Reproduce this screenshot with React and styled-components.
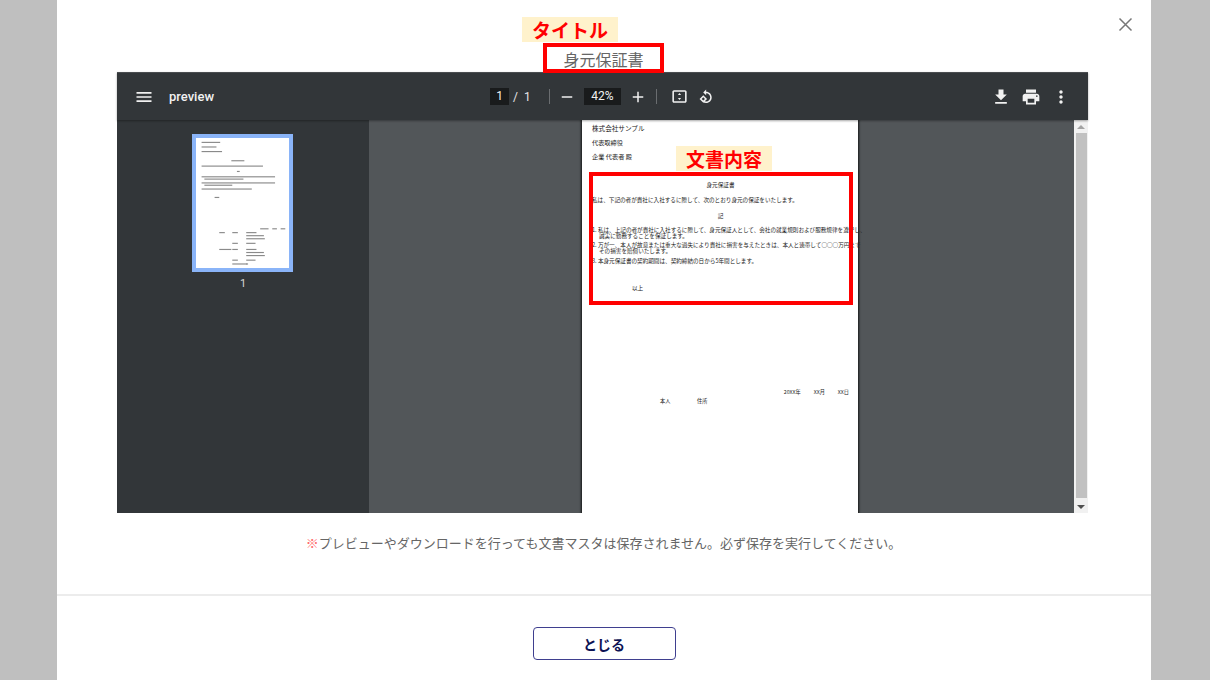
import React from "react";
import styled, { createGlobalStyle } from "styled-components";

const GlobalStyle = createGlobalStyle`
  html, body {
    margin: 0;
    padding: 0;
    background: #bfbfbf;
    font-family: "Noto Sans CJK JP", "Noto Sans", sans-serif;
  }
`;

const Backdrop = styled.div`
  width: 1210px;
  height: 680px;
  overflow: hidden;
  display: flex;
  justify-content: center;
  background: #bfbfbf;
`;

const Modal = styled.div`
  position: relative;
  width: 1094px;
  height: 680px;
  margin-left: -2px;
  background: #fff;
  display: flex;
  flex-direction: column;
`;

const CloseButton = styled.button`
  position: absolute;
  top: 16px;
  right: 17px;
  width: 17px;
  height: 17px;
  padding: 0;
  border: none;
  background: none;
  color: #777;
  display: flex;
`;

const Title = styled.h1`
  margin: 0;
  height: 72px;
  padding-top: 47px;
  box-sizing: border-box;
  text-align: center;
  font-size: 16px;
  line-height: 24px;
  font-weight: 400;
  color: #666;
  padding-right: 1px;
`;

const Viewer = styled.div`
  width: 971px;
  height: 441px;
  margin-left: 60px;
  display: flex;
  flex-direction: column;
  background: #525659;
  font-family: Roboto, "Noto Sans CJK JP", sans-serif;
`;

const Toolbar = styled.div`
  height: 48px;
  flex: none;
  display: grid;
  grid-template-columns: 1fr auto 1fr;
  align-items: center;
  background: #323639;
  border-top: 1px solid #4a4d50;
  box-sizing: border-box;
  box-shadow: 0 1px 2px rgba(0, 0, 0, 0.35);
  color: #f1f1f1;
  position: relative;
`;

const ToolGroup = styled.div`
  display: flex;
  align-items: center;
  justify-content: ${(p) => p.$justify || "flex-start"};
  padding: ${(p) => p.$padding || "0"};
`;

const DocName = styled.span`
  margin-left: 15px;
  font-size: 13px;
  font-weight: 500;
  color: #f1f1f1;
`;

const PageBox = styled.span`
  width: ${(p) => p.$width}px;
  height: 17px;
  background: #191b1c;
  color: #f1f1f1;
  font-size: 12px;
  line-height: 17px;
  text-align: center;
`;

const PageCount = styled.span`
  margin-left: 4px;
  font-size: 12px;
  width: 32px;
  word-spacing: 3px;
  color: #e6e6e6;
`;

const ToolSep = styled.span`
  width: 1px;
  height: 15px;
  background: #6a6d70;
  margin: ${(p) => p.$margin};
`;

const ToolIcon = styled.svg`
  width: ${(p) => p.$size || 20}px;
  height: ${(p) => p.$size || 20}px;
  fill: currentColor;
  flex: none;
  margin: ${(p) => p.$margin || "0"};
`;

const ViewerBody = styled.div`
  flex: 1;
  min-height: 0;
  display: flex;
`;

const Sidebar = styled.div`
  width: 252px;
  flex: none;
  background: #323639;
  display: flex;
  flex-direction: column;
  align-items: center;
  padding-top: 14px;
  box-sizing: border-box;
`;

const ThumbFrame = styled.div`
  width: 93px;
  height: 130px;
  border: 4px solid #8ab4f8;
  line-height: 0;
  margin-right: 1px;
`;

const ThumbNumber = styled.div`
  margin-top: 5px;
  font-size: 11px;
  line-height: 14px;
  color: #d8d8d8;
`;

const PageArea = styled.div`
  flex: 1;
  display: flex;
  justify-content: center;
  overflow: hidden;
  padding-right: 1px;
`;

const Sheet = styled.div`
  width: 276px;
  height: 394px;
  margin-right: 2px;
  background: #fff;
  box-shadow: 0 0 2px 1px rgba(0, 0, 0, 0.75);
  padding: 4px 9px 0 10px;
  box-sizing: border-box;
  display: flex;
  flex-direction: column;
  font-family: "Noto Sans CJK JP", sans-serif;
  color: #222;
`;

const DocLine = styled.div`
  font-size: ${(p) => p.$size || 5.6}px;
  line-height: ${(p) => p.$lh || 8}px;
  margin-top: ${(p) => p.$top || 0}px;
  text-align: ${(p) => p.$align || "left"};
  padding-left: ${(p) => p.$indent || 0}px;
  white-space: nowrap;
`;

const DateRow = styled.div`
  display: flex;
  justify-content: flex-end;
  gap: 13px;
  margin-top: 96px;
  font-size: 5.2px;
  line-height: 8px;
`;

const SignTable = styled.div`
  display: grid;
  grid-template-columns: 68px 37px 1fr;
  padding-left: 0;
  font-size: 5.2px;
  line-height: 10px;
  margin-top: 0;
  margin-left: 0;
`;

const SignCell = styled.div`
  grid-column: ${(p) => p.$col};
  margin-top: ${(p) => p.$top || 0}px;
  white-space: nowrap;
  padding-left: ${(p) => p.$pad || 0}px;
`;

const Scrollbar = styled.div`
  width: 14px;
  flex: none;
  background: #f1f1f1;
  display: flex;
  flex-direction: column;
  align-items: center;
`;

const ScrollArrow = styled.div`
  height: 13px;
  flex: none;
  display: flex;
  align-items: center;
  justify-content: center;
  &::before {
    content: "";
    border-left: 4px solid transparent;
    border-right: 4px solid transparent;
    ${(p) => (p.$down ? "border-top: 4px solid #505050;" : "border-bottom: 4px solid #a3a3a3;")}
  }
`;

const ScrollThumb = styled.div`
  width: 11px;
  flex: 1;
  background: #c1c1c1;
  margin-bottom: 2px;
`;

const Note = styled.p`
  margin: 20px 0 0;
  height: 61px;
  text-align: center;
  font-size: 13px;
  line-height: 19px;
  color: #666;
  padding-right: 1px;
`;

const Mark = styled.span`
  color: #ff6b6b;
`;

const Footer = styled.div`
  flex: 1;
  border-top: 2px solid #ececec;
  display: flex;
  justify-content: center;
  padding-top: 31px;
`;

const CloseAction = styled.button`
  width: 143px;
  height: 33px;
  box-sizing: border-box;
  background: #fff;
  border: 1px solid #3f3f8f;
  border-radius: 4px;
  color: #0c1254;
  font-family: "Noto Sans CJK JP", sans-serif;
  font-size: 14px;
  font-weight: 700;
  line-height: 20px;
  padding: 0;
`;

const NoteLabel = styled.div`
  position: absolute;
  left: ${(p) => p.$x}px;
  top: ${(p) => p.$y}px;
  width: 96px;
  height: 25px;
  background: #fff2cc;
  color: #ff0000;
  font-size: 19px;
  font-weight: 700;
  line-height: 25px;
  text-align: center;
`;

const RedBox = styled.div`
  position: absolute;
  left: ${(p) => p.$x}px;
  top: ${(p) => p.$y}px;
  width: ${(p) => p.$w}px;
  height: ${(p) => p.$h}px;
  box-sizing: border-box;
  border: 4px solid #ff0000;
`;

const thumbLines = [
  [6, 5, 20], [6, 11, 16], [6, 17, 22],
  [38, 29, 14], [6, 36, 66], [44, 43, 3],
  [6, 50, 79], [9, 53, 42], [6, 58, 79], [9, 61, 30], [6, 66, 54],
  [20, 77, 5],
  [69, 118, 9], [82, 118, 5], [91, 118, 5],
  [25, 123, 6], [39, 123, 6], [54, 123, 11], [54, 127, 19], [54, 131, 20], [39, 137, 6], [54, 137, 10],
  [25, 145, 13], [39, 145, 6], [54, 145, 11], [54, 149, 19], [54, 153, 20], [39, 159, 6], [54, 159, 10], [39, 164, 16], [54, 164, 2],
];

function Thumbnail() {
  return (
    <svg width="93" height="130" viewBox="0 0 100 170" preserveAspectRatio="none">
      <rect width="100" height="170" fill="#fff" />
      {thumbLines.map(([x, y, w], i) => (
        <rect key={i} x={x} y={y} width={w} height="1.5" fill="#8a8a8a" />
      ))}
    </svg>
  );
}

export default function App() {
  return (
    <>
      <GlobalStyle />
      <Backdrop>
        <Modal>
          <CloseButton aria-label="close">
            <svg width="17" height="17" viewBox="0 0 17 17" fill="none" stroke="currentColor" strokeWidth="1.5">
              <path d="M2.5 2.5l12 12M14.5 2.5l-12 12" />
            </svg>
          </CloseButton>

          <Title>身元保証書</Title>

          <Viewer>
            <Toolbar>
              <ToolGroup $padding="0 0 0 17px">
                <ToolIcon viewBox="0 0 24 24">
                  <path d="M3 18h18v-2H3v2zm0-5h18v-2H3v2zm0-7v2h18V6H3z" />
                </ToolIcon>
                <DocName>preview</DocName>
              </ToolGroup>
              <ToolGroup>
                <PageBox $width={19}>1</PageBox>
                <PageCount>/ 1</PageCount>
                <ToolSep $margin="0 8px 0 4px" />
                <ToolIcon viewBox="0 0 24 24" $size={18}>
                  <path d="M5 11h14v2H5z" />
                </ToolIcon>
                <PageBox $width={37} style={{ marginLeft: 8 }}>42%</PageBox>
                <ToolIcon viewBox="0 0 24 24" $size={18} $margin="0 0 0 8px">
                  <path d="M19 13h-6v6h-2v-6H5v-2h6V5h2v6h6v2z" />
                </ToolIcon>
                <ToolSep $margin="0 13px 0 9px" />
                <ToolIcon viewBox="0 0 24 24" $size={19}>
                  <path d="M19 4H5c-1.1 0-2 .9-2 2v12c0 1.1.9 2 2 2h14c1.1 0 2-.9 2-2V6c0-1.1-.9-2-2-2zm0 14H5V6h14v12zM12 7.5l-2 2.5h4l-2-2.5zm0 9l2-2.5h-4l2 2.5z" />
                </ToolIcon>
                <ToolIcon viewBox="0 0 24 24" $size={18} $margin="0 0 0 8px">
                  <path d="M12.2 5.1V2L8.3 5.9l3.9 3.8V7.1c3 0 5.4 2.4 5.4 5.4s-2.4 5.4-5.4 5.4c-1.2 0-2.3-.4-3.2-1l-1.4 1.4c1.3 1 2.9 1.6 4.6 1.6 4.1 0 7.4-3.3 7.4-7.4s-3.3-7.4-7.4-7.4zM8.4 9.6l-5 5 5 5 5-5-5-5zm0 2.8l2.2 2.2-2.2 2.2-2.2-2.2 2.2-2.2z" />
                </ToolIcon>
              </ToolGroup>
              <ToolGroup $justify="flex-end" $padding="0 17px 0 0">
                <ToolIcon viewBox="0 0 24 24">
                  <path d="M19 9h-4V3H9v6H5l7 7 7-7zM5 18v2h14v-2H5z" />
                </ToolIcon>
                <ToolIcon viewBox="0 0 24 24" $margin="0 0 0 10px">
                  <path d="M19 8H5c-1.66 0-3 1.34-3 3v6h4v4h12v-4h4v-6c0-1.66-1.34-3-3-3zm-3 11H8v-5h8v5zm3-7c-.55 0-1-.45-1-1s.45-1 1-1 1 .45 1 1-.45 1-1 1zm-1-9H6v4h12V3z" />
                </ToolIcon>
                <ToolIcon viewBox="0 0 24 24" $margin="0 0 0 10px">
                  <path d="M12 8c1.1 0 2-.9 2-2s-.9-2-2-2-2 .9-2 2 .9 2 2 2zm0 2c-1.1 0-2 .9-2 2s.9 2 2 2 2-.9 2-2-.9-2-2-2zm0 6c-1.1 0-2 .9-2 2s.9 2 2 2 2-.9 2-2-.9-2-2-2z" />
                </ToolIcon>
              </ToolGroup>
            </Toolbar>

            <ViewerBody>
              <Sidebar>
                <ThumbFrame>
                  <Thumbnail />
                </ThumbFrame>
                <ThumbNumber>1</ThumbNumber>
              </Sidebar>

              <PageArea>
                <Sheet>
                  <DocLine $size={6.6}>株式会社サンプル</DocLine>
                  <DocLine $size={6.2} $top={7}>代表取締役</DocLine>
                  <DocLine $size={6.2} $top={6}>企業 代表者 殿</DocLine>
                  <DocLine $align="center" $top={20}>身元保証書</DocLine>
                  <DocLine $top={7}>私は、下記の者が貴社に入社するに際して、次のとおり身元の保証をいたします。</DocLine>
                  <DocLine $align="center" $top={8}>記</DocLine>
                  <DocLine $top={7} $lh={6}>1. 私は、上記の者が貴社に入社するに際して、身元保証人として、会社の就業規則および服務規律を遵守し、</DocLine>
                  <DocLine $lh={6} $indent={7}>誠実に勤務することを保証します。</DocLine>
                  <DocLine $top={3} $lh={6}>2. 万が一、本人が故意または重大な過失により貴社に損害を与えたときは、本人と連帯して○○○万円まで</DocLine>
                  <DocLine $lh={6} $indent={7}>その損害を賠償いたします。</DocLine>
                  <DocLine $top={4} $lh={6}>3. 本身元保証書の契約期間は、契約締結の日から5年間とします。</DocLine>
                  <DocLine $top={20} $indent={40}>以上</DocLine>

                  <DateRow>
                    <span>20XX年</span>
                    <span>XX月</span>
                    <span>XX日</span>
                  </DateRow>
                  <SignTable>
                    <SignCell $col={1} $pad={68}>本人</SignCell>
                    <SignCell $col="2 / 4" $pad={37}>住所</SignCell>
                  </SignTable>
                </Sheet>
              </PageArea>

              <Scrollbar>
                <ScrollArrow />
                <ScrollThumb />
                <ScrollArrow $down />
              </Scrollbar>
            </ViewerBody>
          </Viewer>

          <Note>
            <Mark>※</Mark>プレビューやダウンロードを行っても文書マスタは保存されません。必ず保存を実行してください。
          </Note>

          <Footer>
            <CloseAction>とじる</CloseAction>
          </Footer>

          <NoteLabel $x={465} $y={17}>タイトル</NoteLabel>
          <RedBox $x={486} $y={43} $w={121} $h={30} />
          <NoteLabel $x={619} $y={146}>文書内容</NoteLabel>
          <RedBox $x={532} $y={172} $w={264} $h={133} />
        </Modal>
      </Backdrop>
    </>
  );
}
